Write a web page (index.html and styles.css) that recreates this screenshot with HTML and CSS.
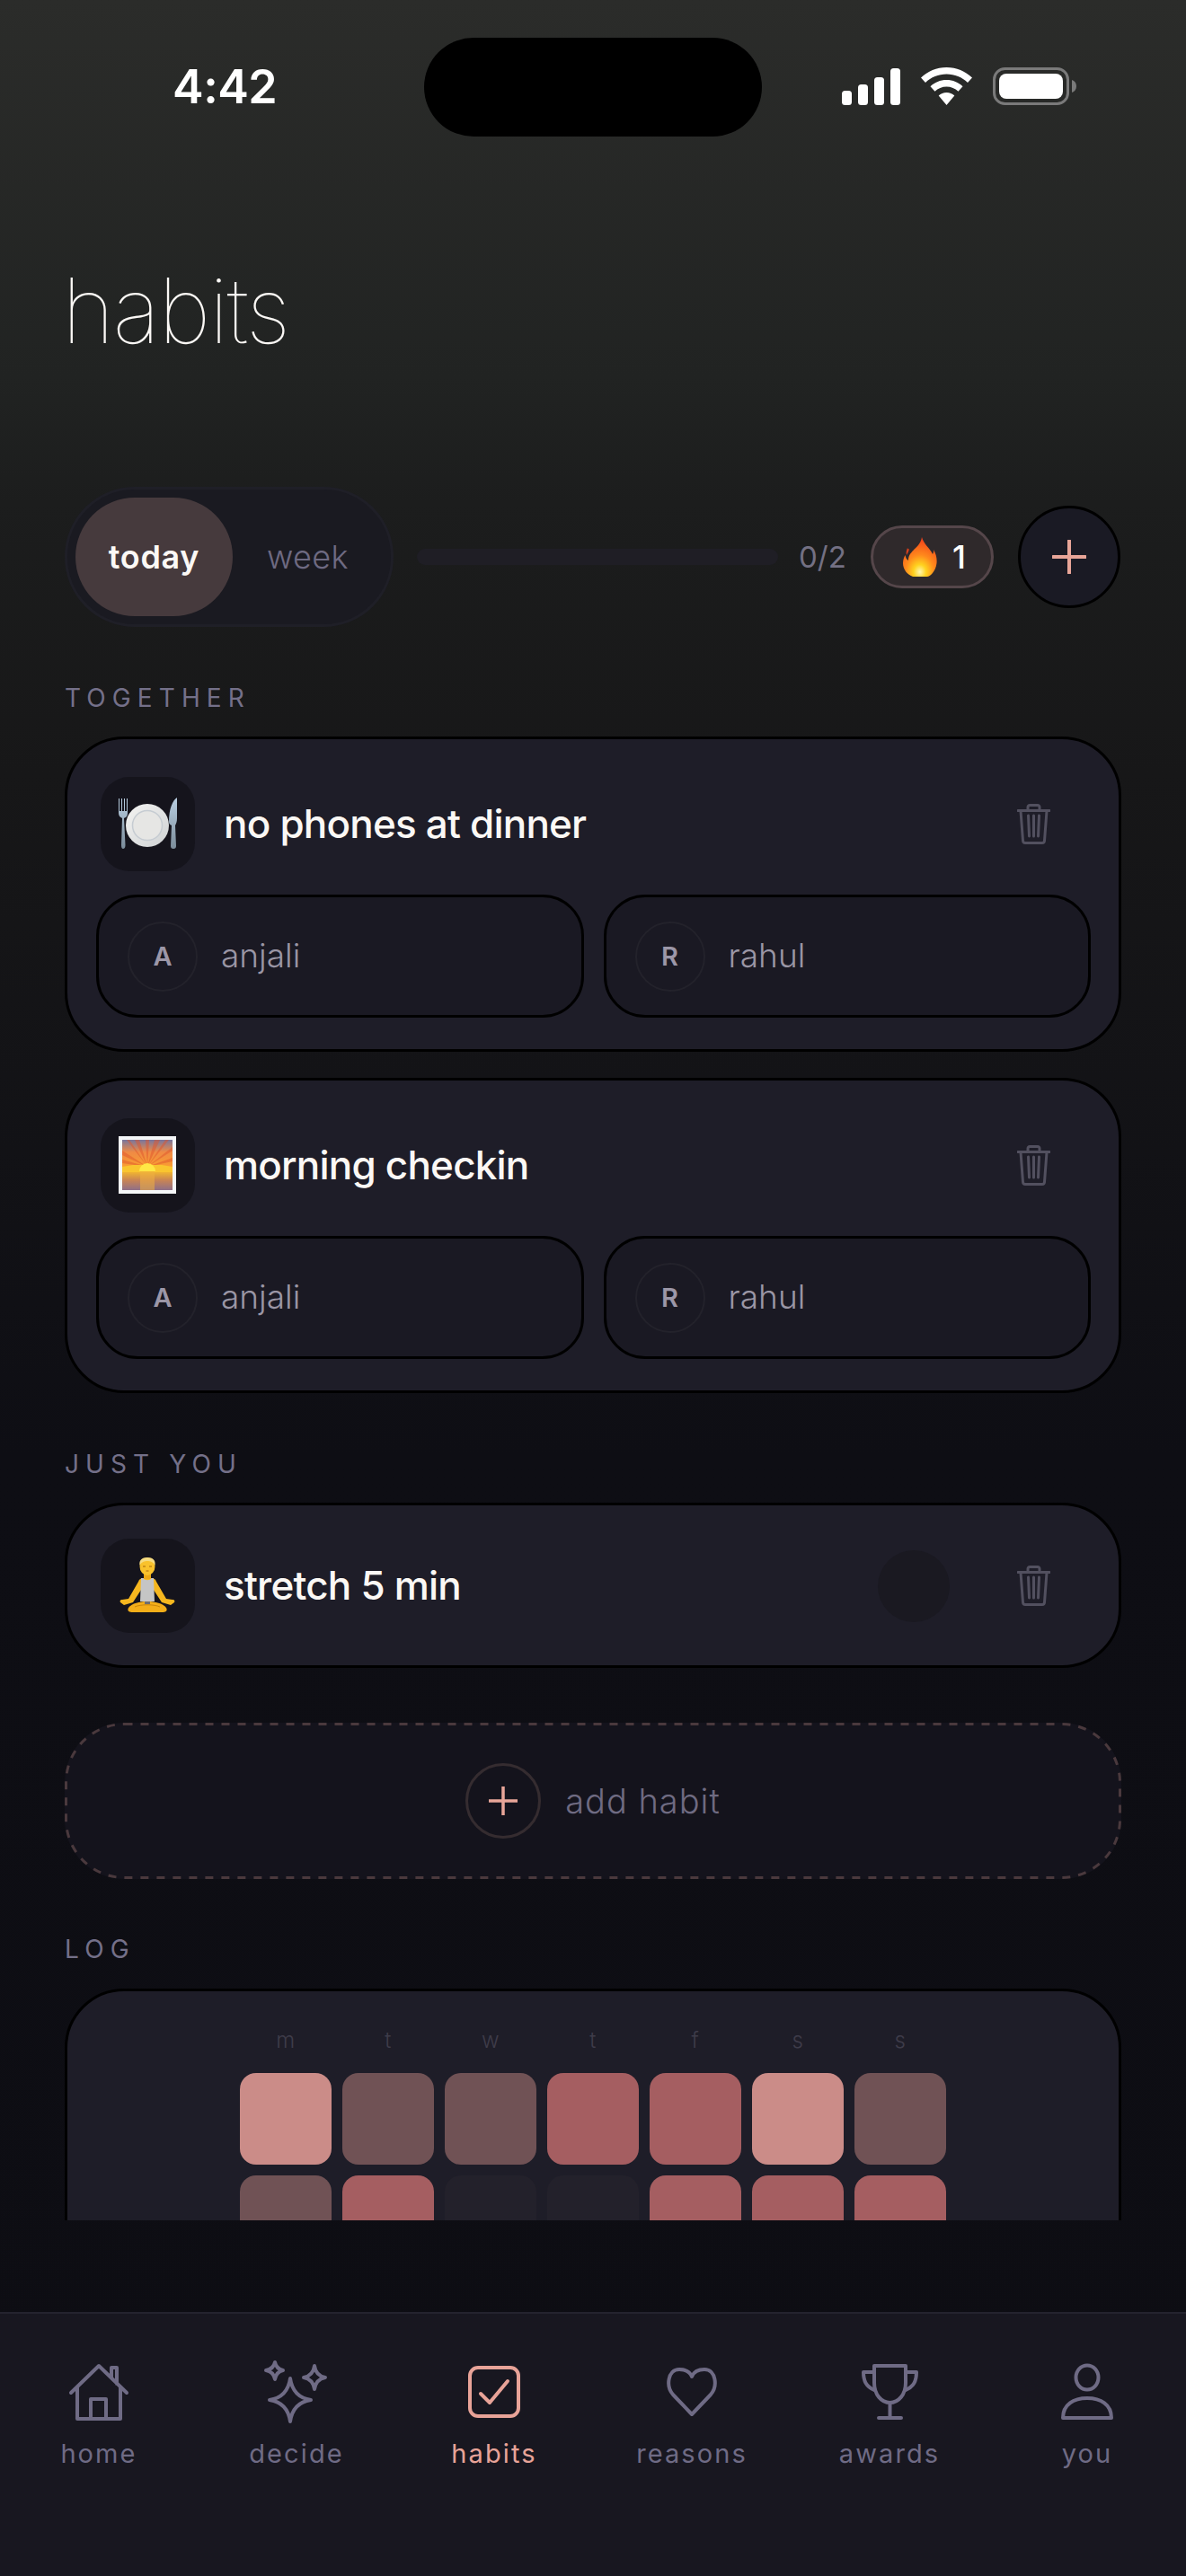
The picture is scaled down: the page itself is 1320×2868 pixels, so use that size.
FILE: index.html
```html
<!DOCTYPE html>
<html lang="en">
<head>
<meta charset="utf-8">
<title>habits</title>
<link rel="stylesheet" href="styles.css">
</head>
<body>
<div class="screen">
  <header class="status">
    <div class="time">4:42</div>
    <div class="island"></div>
    <div class="sys">
      <svg class="sys-signal" width="65" height="41" viewBox="0 0 65 41"><rect x="0" y="25" width="11" height="16" rx="3.5"/><rect x="18" y="18" width="11" height="23" rx="3.5"/><rect x="36" y="10" width="11" height="31" rx="3.5"/><rect x="54" y="0" width="11" height="41" rx="3.5"/></svg>
      <svg class="sys-wifi" width="57" height="42" viewBox="0 0 57 42"><path d="M28.500 0C17.500 0 7.500 4.300 0 11.500L5 17C11.200 11 19.500 7.500 28.500 7.500S45.800 11 52 17L57 11.500C49.500 4.300 39.500 0 28.500 0Z"/><path d="M28.500 14C21.500 14 15.200 16.700 10.500 21.200L15.500 26.700C18.900 23.500 23.500 21.500 28.500 21.500S38.100 23.500 41.500 26.700L46.500 21.200C41.800 16.700 35.500 14 28.500 14Z"/><path d="M28.500 28C25.100 28 22 29.300 19.700 31.500L28.500 42L37.300 31.500C35 29.300 31.900 28 28.500 28Z"/></svg>
      <svg class="sys-batt" width="93" height="42" viewBox="0 0 93 42"><rect x="1.500" y="1.500" width="82" height="39" rx="12" fill="none" stroke="#7a7a7a" stroke-width="3"/><rect x="7" y="7" width="71" height="28" rx="8" fill="#fff"/><path d="M88 14V28C91 27 93 24.500 93 21S91 15 88 14Z" fill="#7a7a7a"/></svg>
    </div>
  </header>

  <h1 class="title">habits</h1>

  <main class="scroll">
    <section class="toolbar">
      <div class="segment">
        <span class="seg seg-on">today</span>
        <span class="seg seg-off">week</span>
      </div>
      <div class="track"></div>
      <span class="count">0/2</span>
      <div class="streak">
        <svg class="flame" width="38" height="44" viewBox="0 0 38 44">
          <defs><radialGradient id="fl" cx="50%" cy="88%" r="85%"><stop offset="0" stop-color="#fff7b0"/><stop offset=".22" stop-color="#ffd21f"/><stop offset=".5" stop-color="#ff8a1c"/><stop offset="1" stop-color="#f2401a"/></radialGradient></defs>
          <path d="M21 0C23 8 30 12 33 19C34.500 16.500 34 14.500 34 14C37 19 38 24 37.500 29C36.500 38 30 44 27 44H11C5 42 0 36 0 29C0 25 1.500 21.500 2.500 20C3 23 4 25 6 26C5.500 18 13 14 17 9C18.500 7 20.500 4 21 0Z" fill="url(#fl)"/>
          <path d="M5 12C4 15 3 17 4 20C5 18 6.500 16 7 13C6 14 5.500 13 5 12Z" fill="#d8401c"/>
        </svg>
        <span class="streak-n">1</span>
      </div>
      <button class="round-add" type="button">
        <svg width="38" height="38" viewBox="0 0 38 38"><path d="M19 1V37M1 19H37" class="plus-line"/></svg>
      </button>
    </section>

    <div class="label">TOGETHER</div>

    <article class="card card-duo">
      <div class="row">
        <div class="emoji">
          <svg width="105" height="105" viewBox="0 0 105 105">
            <defs>
              <linearGradient id="pl" x1="0" y1="0" x2="1" y2="1"><stop offset="0" stop-color="#f4f4f2"/><stop offset="1" stop-color="#cfd2d4"/></linearGradient>
              <linearGradient id="mt" x1="0" y1="0" x2="0" y2="1"><stop offset="0" stop-color="#b9cfe2"/><stop offset="1" stop-color="#7b8c9a"/></linearGradient>
            </defs>
            <circle cx="52" cy="54" r="24" fill="url(#pl)"/>
            <circle cx="52" cy="54" r="16.500" fill="#e6e6e4" stroke="#c6ccd2" stroke-width="1.500"/>
            <path d="M20 24V40C20 44 22.500 45 24 46L23 76C23 79 24 80 25 80S27.500 79 27.500 76L26 46C28 45 30 44 30 40V24H29V38H27V24H26V38H24V24H23V38H21V24Z" fill="url(#mt)"/>
            <path d="M85 23C80 26 76 36 76 50C76 52 77 53 79 54L78 77C78 79 79 80 81 80S84 79 84 77L83 54C84 52 85 50 85 46Z" fill="url(#mt)"/>
          </svg>
        </div>
        <div class="name">no phones at dinner</div>
        <svg class="trash" width="37" height="45" viewBox="0 0 37 45"><path d="M1 7.500H36M12 7V3.500C12 2.500 13 1.500 14 1.500H23C24 1.500 25 2.500 25 3.500V7M4 8L6.500 41C6.600 42.500 7.500 43.500 9 43.500H28C29.500 43.500 30.400 42.500 30.500 41L33 8M12.500 13L13.500 36M18.500 13V36M24.500 13L23.500 36"/></svg>
      </div>
      <div class="people">
        <div class="person"><span class="avatar">A</span><span class="who">anjali</span></div>
        <div class="person"><span class="avatar">R</span><span class="who">rahul</span></div>
      </div>
    </article>

    <article class="card card-duo card-next">
      <div class="row">
        <div class="emoji">
          <svg width="105" height="105" viewBox="0 0 105 105">
            <defs>
              <linearGradient id="sky" x1="0" y1="0" x2="0" y2="1"><stop offset="0" stop-color="#77769f"/><stop offset=".4" stop-color="#ef8a45"/><stop offset="1" stop-color="#fca12c"/></linearGradient>
              <linearGradient id="sea" x1="0" y1="0" x2="0" y2="1"><stop offset="0" stop-color="#f0b431"/><stop offset=".45" stop-color="#c98454"/><stop offset="1" stop-color="#8f6f88"/></linearGradient>
            </defs>
            <rect x="20" y="20" width="64" height="64" fill="#f4f6f8"/>
            <rect x="24" y="24" width="56" height="34" fill="url(#sky)"/>
            <path d="M52 54L38 24H43ZM52 54L50 24H54ZM52 54L60 24H66ZM52 54L72 24H76ZM52 54L80 32V36ZM52 54L80 44V48ZM52 54L24 36V41ZM52 54L24 46V50ZM52 54L29 24H32Z" fill="#e0562c" opacity=".5"/>
            <path d="M24 54L36 52L68 52L80 54V60H24Z" fill="#f9c52f"/>
            <rect x="24" y="60" width="56" height="20" fill="url(#sea)"/>
            <path d="M43 59A9 9 0 0 1 61 59Z" fill="#ffe745"/>
            <rect x="44" y="59" width="16" height="21" fill="#f0b040" opacity=".55"/>
          </svg>
        </div>
        <div class="name">morning checkin</div>
        <svg class="trash" width="37" height="45" viewBox="0 0 37 45"><path d="M1 7.500H36M12 7V3.500C12 2.500 13 1.500 14 1.500H23C24 1.500 25 2.500 25 3.500V7M4 8L6.500 41C6.600 42.500 7.500 43.500 9 43.500H28C29.500 43.500 30.400 42.500 30.500 41L33 8M12.500 13L13.500 36M18.500 13V36M24.500 13L23.500 36"/></svg>
      </div>
      <div class="people">
        <div class="person"><span class="avatar">A</span><span class="who">anjali</span></div>
        <div class="person"><span class="avatar">R</span><span class="who">rahul</span></div>
      </div>
    </article>

    <div class="label">JUST YOU</div>

    <article class="card card-solo">
      <div class="row">
        <div class="emoji">
          <svg width="105" height="105" viewBox="0 0 105 105">
            <path d="M26 74L22 71C21 69 22 68 24 68L31 67L42 48C43 45 45 44 47 44H57C59 44 61 45 62 48L73 67L80 68C82 68 83 69 82 71L78 74L68 71L57 54H47L36 71Z" fill="#f6b71f"/>
            <path d="M45 44H47.500C48.500 47 55.500 47 56.500 44H59L60 70H44Z" fill="#c5c5c5"/>
            <path d="M31 77C35 72 43 70 52 70S69 72 73 77C75 81 72 82 68 82H36C32 82 29 81 31 77Z" fill="#f3ae19"/>
            <path d="M38 76C44 73 60 73 66 76" fill="none" stroke="#c9860b" stroke-width="1"/>
            <rect x="49" y="70" width="6" height="3" fill="#6e6e6e"/>
            <rect x="48" y="38" width="8" height="7" fill="#eda916"/>
            <ellipse cx="52" cy="31" rx="8.500" ry="10" fill="#f9c22c"/>
            <path d="M43.500 30C42.500 24 46 21 52 21S61.500 24 60.500 30C59 26 55 25 52 25S45 26 43.500 30Z" fill="#f6dc82"/>
            <path d="M47 31H50M54 31H57M50.500 36H53.500" stroke="#a8690a" stroke-width="1"/>
          </svg>
        </div>
        <div class="name">stretch 5 min</div>
        <div class="ghost"></div>
        <svg class="trash" width="37" height="45" viewBox="0 0 37 45"><path d="M1 7.500H36M12 7V3.500C12 2.500 13 1.500 14 1.500H23C24 1.500 25 2.500 25 3.500V7M4 8L6.500 41C6.600 42.500 7.500 43.500 9 43.500H28C29.500 43.500 30.400 42.500 30.500 41L33 8M12.500 13L13.500 36M18.500 13V36M24.500 13L23.500 36"/></svg>
      </div>
    </article>

    <button class="add" type="button">
      <svg class="add-dash" width="1176" height="174" viewBox="0 0 1176 174"><rect x="1.500" y="1.500" width="1173" height="171" rx="65"/></svg>
      <span class="add-ring"><svg width="32" height="32" viewBox="0 0 32 32"><path d="M16 0V32M0 16H32" class="plus-line plus-thin"/></svg></span>
      <span class="add-text">add habit</span>
    </button>

    <div class="label label-log">LOG</div>

    <article class="log">
      <div class="grid">
        <span class="d">m</span><span class="d">t</span><span class="d">w</span><span class="d">t</span><span class="d">f</span><span class="d">s</span><span class="d">s</span>
        <i class="c hi"></i><i class="c mid"></i><i class="c mid"></i><i class="c str"></i><i class="c str"></i><i class="c hi"></i><i class="c mid"></i>
        <i class="c mid"></i><i class="c str"></i><i class="c off"></i><i class="c off"></i><i class="c str"></i><i class="c str"></i><i class="c str"></i>
      </div>
    </article>
  </main>

  <nav class="tabs">
    <div class="tab">
      <svg class="ti" width="66" height="66" viewBox="0 0 66 66"><path d="M2 33L33 3L64 33M9 27V62H57V27M24 62V40H41V62M47 16V5H53V23"/></svg>
      <span>home</span>
    </div>
    <div class="tab">
      <svg class="ti" width="66" height="66" viewBox="0 0 66 66"><path d="M26 17Q29 38 49 41Q29 44 26 65Q23 44 3 41Q23 38 26 17Z"/><path d="M9 -1Q10.500 6.500 18 8Q10.500 9.500 9 18Q7.500 9.500 -1 8Q7.500 6.500 9 -1Z"/><path d="M53 3Q54.500 14 65 16Q54.500 18 53 29Q51.500 18 41 16Q51.500 14 53 3Z"/></svg>
      <span>decide</span>
    </div>
    <div class="tab tab-on">
      <svg class="ti" width="66" height="66" viewBox="0 0 66 66"><rect x="6" y="5" width="54" height="54" rx="9"/><path d="M18 34L28 44L48 20"/></svg>
      <span>habits</span>
    </div>
    <div class="tab">
      <svg class="ti" width="66" height="66" viewBox="0 0 66 66"><path d="M33 57L12 35C4 26 6 7 19 7C26 7 31 10 33 15C35 10 40 7 47 7C60 7 62 26 54 35Z"/></svg>
      <span>reasons</span>
    </div>
    <div class="tab">
      <svg class="ti" width="66" height="66" viewBox="0 0 66 66"><path d="M16 3H51V22C51 35 43 44 33.500 44C24 44 16 35 16 22Z"/><path d="M16 10H4C4 20 7 26 16 30M51 10H63C63 20 60 26 51 30M33.500 44V60M21 61H46"/></svg>
      <span>awards</span>
    </div>
    <div class="tab">
      <svg class="ti" width="66" height="66" viewBox="0 0 66 66"><ellipse cx="33" cy="16" rx="12.500" ry="13.500"/><path d="M6 61C6 46 18 39 33 39C48 39 60 46 60 61Z"/></svg>
      <span>you</span>
    </div>
  </nav>
</div>
</body>
</html>
```
FILE: styles.css
```css
* { box-sizing: border-box; margin: 0; padding: 0; }
html, body { width: 1320px; height: 2868px; background: #0e0e14; overflow: hidden; }
body { font-family: Inter, "Liberation Sans", sans-serif; color: #fff; }
button { font: inherit; color: inherit; }

.screen {
  width: 1320px; height: 2868px; display: flex; flex-direction: column; overflow: hidden;
  background: linear-gradient(180deg, #2b2c2a 0, #212322 420px, #1c1d1d 560px, #171718 860px, #0e0e14 1620px, #0d0d13 2868px);
}

.status { display: grid; grid-template-columns: 472px 376px 1fr; height: 152px; padding-top: 42px; flex: none; }
.time { padding-left: 192px; font-size: 52px; font-weight: 600; line-height: 62px; margin-top: 24px; letter-spacing: -0.5px; height: 62px; }
.island { width: 376px; height: 110px; border-radius: 55px; background: #000; }
.sys { display: flex; align-items: flex-start; padding: 33px 0 0 89px; }
.sys-signal { fill: #fff; margin-top: 1px; }
.sys-wifi { fill: #fff; margin-left: 23px; }
.sys-batt { margin-left: 23px; }

.title { font-size: 100px; font-weight: 100; line-height: 120px; letter-spacing: -1.8px; padding-left: 69px; margin-top: 134px; color: #fbf8f5; height: 120px; flex: none; }

.scroll { height: 1930px; margin-top: 136px; padding: 0 72px; overflow: hidden; flex: none; }

.toolbar { display: flex; align-items: center; height: 156px; }
.segment { width: 366px; height: 156px; border: 3px solid #1f1f27; border-radius: 78px; background: #1a1a21; padding: 9px; display: flex; align-items: center; flex: none; }
.seg { font-size: 36px; height: 132px; display: flex; align-items: center; justify-content: center; }
.seg-on { width: 178px; border-radius: 66px; background: #463a3d; font-weight: 600; letter-spacing: .7px; color: #fbf8f5; }
.seg-off { width: 170px; font-weight: 300; color: #6e6a82; letter-spacing: .4px; }
.track { flex: none; width: 402px; height: 18px; border-radius: 9px; background: #1f1e25; margin-left: 26px; }
.count { font-size: 33px; color: #737083; width: 52px; margin-left: 23px; flex: none; font-weight: 400; }
.streak { display: flex; align-items: center; width: 137px; height: 70px; border: 3px solid #55464a; border-radius: 35px; background: #2f292b; margin-left: 28px; padding-left: 33px; flex: none; }
.flame { flex: none; }
.streak-n { font-size: 36px; font-weight: 500; margin-left: 17px; line-height: 1; }
.round-add { flex: none; width: 114px; height: 114px; border-radius: 50%; border: 3px solid #000; background: #1a1a24; margin-left: 27px; display: flex; align-items: center; justify-content: center; }
.plus-line { fill: none; stroke: #e8a598; stroke-width: 4; stroke-linecap: round; }
.plus-thin { stroke-width: 3.500; }

.label { font-size: 28px; line-height: 34px; letter-spacing: 7.1px; color: #747089; margin: 62px 0 26px; font-weight: 400; }
.label-log { margin: 61px 0 27px; }

.card { border: 3px solid #000; border-radius: 66px; background: #1e1d28; }
.card-duo { height: 351px; padding: 42px 31px 34px 32px; }
.card-next { margin-top: 29px; }
.card-solo { height: 184px; padding: 37px 76px 37px 37px; }
.card-solo .row { padding: 0; }
.row { display: flex; align-items: center; height: 105px; padding: 0 45px 0 5px; }
.emoji { width: 105px; height: 105px; border-radius: 32px; background: #15141c; flex: none; }
.emoji svg { display: block; }
.name { flex: 1; margin: 0 0 2px 32px; font-size: 44px; font-weight: 450; color: #fbf8f5; letter-spacing: -.8px; }
.trash { flex: none; fill: none; stroke: #52505f; stroke-width: 3; stroke-linecap: round; stroke-linejoin: round; }
.ghost { flex: none; width: 80px; height: 80px; border-radius: 50%; background: #1a1921; margin-right: 75px; }

.people { display: flex; gap: 22px; margin-top: 26px; }
.person { flex: 1; height: 137px; border: 3px solid #000; border-radius: 46px; background: #1a1923; display: flex; align-items: center; padding-left: 32px; }
.avatar { width: 78px; height: 78px; border-radius: 50%; border: 2px solid #23222b; display: flex; align-items: center; justify-content: center; font-size: 29px; font-weight: 600; color: #9c97a8; flex: none; }
.who { margin: 0 0 2px 26px; font-size: 37px; font-weight: 300; color: #9a96a5; }

.add { position: relative; width: 1176px; height: 174px; margin-top: 61px; border: 0; border-radius: 66px; background: #14131c; display: flex; align-items: center; justify-content: center; }
.add-dash { position: absolute; left: 0; top: 0; fill: none; stroke: #4a393d; stroke-width: 3; stroke-dasharray: 9 9; }
.add-ring { width: 84px; height: 84px; border-radius: 50%; border: 3px solid #352c30; display: flex; align-items: center; justify-content: center; flex: none; }
.add-text { margin-left: 27px; font-size: 38px; font-weight: 300; color: #6f6b82; letter-spacing: 1px; }

.log { height: 340px; border: 3px solid #000; border-radius: 66px; background: #1e1d28; padding-top: 37px; }
.grid { display: grid; grid-template-columns: repeat(7, 102px); grid-template-rows: 42px 102px 102px; gap: 12px; width: 786px; margin: 0 auto; }
.grid .d { height: 42px; font-size: 24px; font-weight: 300; text-align: center; color: #3e3c4a; line-height: 36px; letter-spacing: .5px; }
.c { display: block; border-radius: 18px; }
.hi { background: #cb8c88; }
.mid { background: #705255; }
.str { background: #a55e61; }
.off { background: #23212b; }

.tabs { flex: 1; margin-top: 102px; border-top: 2px solid #24232f; background: #181720; display: flex; padding-top: 55px; }
.tab { flex: 1; display: flex; flex-direction: column; align-items: center; color: #6f6b85; font-size: 29px; letter-spacing: 2.1px; line-height: 36px; }
.tab span { margin-top: 17px; }
.ti { fill: none; stroke: currentColor; stroke-width: 4; stroke-linecap: round; stroke-linejoin: round; overflow: visible; display: block; }
.tab-on { color: #e8a398; }
```
